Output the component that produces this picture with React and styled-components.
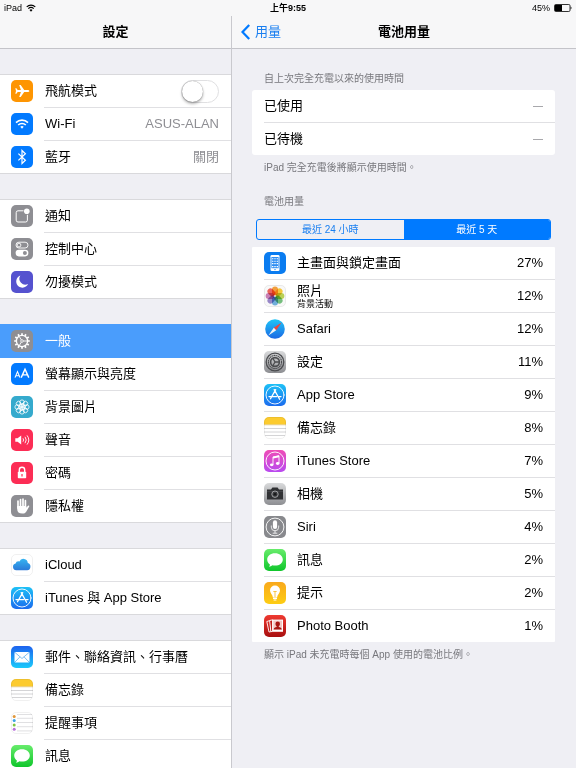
import styled, { createGlobalStyle, css } from "styled-components";
import { useState } from "react";

const GlobalStyle = createGlobalStyle`
  *, *::before, *::after {
    box-sizing: border-box;
  }
  body {
    margin: 0;
    background: #efeff4;
    color: #000;
    font-family: "Liberation Sans", "Noto Sans CJK TC", sans-serif;
    font-size: 13px;
    line-height: 18px;
  }
  a {
    color: inherit;
    text-decoration: none;
  }
`;

const Screen = styled.div`
  display: flex;
  flex-direction: column;
  height: 100vh;
  overflow: hidden;
`;

const StatusBar = styled.header`
  display: grid;
  grid-template-columns: 1fr auto 1fr;
  align-items: center;
  height: 16px;
  padding: 0 4px;
  background: #f7f7f8;
  font-size: 9px;
  line-height: 16px;
`;

const StatusItem = styled.div`
  display: flex;
  align-items: center;
  justify-content: ${({ $end }) => ($end ? "flex-end" : "flex-start")};
  gap: 4px;
`;

const Columns = styled.div`
  display: grid;
  grid-template-columns: 29fr 43fr;
  flex: 1;
  min-height: 0;
`;

const Sidebar = styled.nav`
  min-height: 0;
  overflow: hidden;
  border-right: 1px solid #c9c9ce;
`;

const Detail = styled.main`
  min-height: 0;
  overflow: hidden;
`;

const TitleBar = styled.div`
  display: grid;
  grid-template-columns: 1fr auto 1fr;
  align-items: center;
  height: 33px;
  padding: 0 9px;
  background: #f7f7f8;
  border-bottom: 1px solid #c4c4c9;
`;

const Title = styled.h1`
  grid-column: 2;
  margin: 0;
  font-size: 13px;
  font-weight: 700;
`;

const BackLink = styled.a`
  display: flex;
  align-items: center;
  gap: 5px;
  color: #1a7ff0;
`;

const Groups = styled.div`
  display: flex;
  flex-direction: column;
  gap: 25px;
  padding-top: 25px;
`;

const Group = styled.ul`
  margin: 0;
  padding: 0;
  list-style: none;
  background: #fff;
  border-top: 1px solid #d9d9dc;
  border-bottom: 1px solid #d9d9dc;
`;

const rowLayout = css`
  display: flex;
  align-items: flex-start;
  padding-left: 11px;
  gap: 11px;
`;

const RowBody = styled.span`
  display: flex;
  flex: 1;
  align-items: center;
  justify-content: space-between;
  height: 32px;
  padding: 0 12px 0 1px;
`;

const MenuItem = styled.li`
  &:not(:last-child) ${RowBody} {
    height: 33px;
    border-bottom: 1px solid #e0e0e3;
  }
`;

const MenuLink = styled.a`
  ${rowLayout}
  ${({ $active }) =>
    $active &&
    css`
      background: #4a9dfc;
      color: #fff;
      box-shadow: 0 -1px 0 #4a9dfc;
      && ${RowBody} {
        border-color: #4a9dfc;
      }
    `}
`;

const MenuLabel = styled.label`
  ${rowLayout}
`;

const Value = styled.span`
  color: #8e8e93;
`;

const Switch = styled.input`
  appearance: none;
  width: 38px;
  height: 23px;
  margin: 0;
  border: 1px solid #e0e0e2;
  border-radius: 12px;
  background: #fff;

  &::before {
    content: "";
    display: block;
    width: 21px;
    height: 21px;
    border-radius: 50%;
    background: #fff;
    box-shadow: 0 0 1px rgba(0, 0, 0, 0.5), 0 2px 3px rgba(0, 0, 0, 0.3);
  }
  &:checked {
    background: #4cd964;
  }
  &:checked::before {
    margin-left: 15px;
  }
`;

const Content = styled.div`
  padding: 23px 21px 0 20px;
`;

const Section = styled.section`
  & + & {
    margin-top: 20px;
  }
`;

const Caption = styled.h2`
  margin: 0 12px 4px;
  color: #77777c;
  font-size: 10px;
  font-weight: 400;
  line-height: 14px;
`;

const Note = styled.p`
  margin: 6px 12px 0;
  color: #77777c;
  font-size: 10px;
  line-height: 14px;
`;

const Card = styled.ul`
  margin: 0;
  padding: 0;
  list-style: none;
  background: #fff;
  border-radius: ${({ $square }) => ($square ? "1px" : "3px")};
`;

const CardRow = styled.li`
  display: flex;
  align-items: center;
  gap: 11px;
  height: 32px;
  margin-left: 12px;
  padding-right: 12px;

  &:not(:last-child) {
    height: 33px;
    border-bottom: 1px solid #e0e0e3;
  }
`;

const CardText = styled.div`
  flex: 1;
  line-height: 16px;
`;

const SubText = styled.div`
  font-size: 9px;
  line-height: 10px;
`;

const Dash = styled.span`
  color: #8e8e93;
  font-size: 10px;
`;

const Segmented = styled.div`
  display: flex;
  height: 21px;
  margin: 10px 4px 7px;
  border: 1px solid #007aff;
  border-radius: 3px;
  overflow: hidden;
`;

const Segment = styled.button`
  flex: 1;
  padding: 0;
  border: 0;
  background: ${({ $selected }) => ($selected ? "#007aff" : "transparent")};
  color: ${({ $selected }) => ($selected ? "#fff" : "#1a7ff0")};
  font-family: inherit;
  font-size: 10px;
  line-height: 18px;
`;

const IconSvg = styled.svg`
  display: block;
  flex: none;
  width: 22px;
  height: 22px;
  margin: 5px 0;
`;

const BatteryIcon = styled.svg`
  display: block;
  width: 18px;
  height: 8px;
`;

const WifiIcon = styled.svg`
  display: block;
  width: 10px;
  height: 8px;
`;

const Chevron = styled.svg`
  display: block;
  width: 9px;
  height: 16px;
`;

const WAVES = (
  <>
    <path d="M5 9.6a8.6 8.6 0 0 1 12 0" strokeWidth="1.6" />
    <path d="M7.2 12a5.4 5.4 0 0 1 7.6 0" strokeWidth="1.6" />
    <path d="M11 15.8l-1.7-2a2.6 2.6 0 0 1 3.4 0z" fill="#fff" stroke="none" />
  </>
);

const APP_STORE = (
  <g fill="none" stroke="#fff" strokeLinecap="round">
    <circle cx="11" cy="11" r="9" strokeWidth="0.9" />
    <path d="M11.7 5.6 6.5 14.8M10.2 5.6l5.4 9.6M5 12.6h7.6M14.8 12.6H17" strokeWidth="1.3" />
  </g>
);

const BUBBLE = (
  <path
    d="M11 4.2c4.4 0 7.8 2.7 7.8 6.2s-3.4 6.2-7.8 6.2c-.9 0-1.8-.1-2.6-.3-.9.8-2.2 1.3-3.5 1.4.7-.7 1-1.5 1-2.3-1.700-1.200-2.700-3-2.700-5C3.200 6.900 6.600 4.200 11 4.200z"
    fill="#fff"
  />
);

const NOTES = (
  <>
    <path d="M0 7.5V5a5 5 0 0 1 5-5h12a5 5 0 0 1 5 5v2.5z" fill="#fccb2f" />
    <path d="M0 7.8h22" stroke="#d9b45a" strokeWidth="0.6" />
    <path d="M0 11.5h22M0 15h22M1 18.5h20" stroke="#c9c9cc" strokeWidth="0.8" />
  </>
);

const PETALS = ["#f7941d", "#fbc41c", "#b5cf3a", "#5fb96a", "#5aa6dc", "#8a77c4", "#c66fae", "#ee4f43"];
const TEETH = Array.from({ length: 12 }, (_, i) => i * 30);

// every glyph is drawn on a 22 x 22 tile
const ICONS = {
  airplane: {
    fill: "#fe9502",
    art: (
      <path
        d="M18.4 11c0 .7-.9 1.1-2 1.1h-3.2l-3.500 5H8.200l1.700-5H6.700l-1.300 1.600H4.300L5 11l-.7-2.700h1.100l1.300 1.600h3.200l-1.700-5h1.500l3.500 5h3.200c1.100 0 2 .4 2 1.100z"
        fill="#fff"
      />
    ),
  },
  wifi: { fill: "#027aff", art: <g fill="none" stroke="#fff">{WAVES}</g> },
  bluetooth: {
    fill: "#027aff",
    art: <path d="M7.4 7.6l7 6.700-3.400 3.200v-13l3.400 3.200-7 6.700" fill="none" stroke="#fff" strokeWidth="1.2" />,
  },
  notifications: {
    fill: "#8e8e93",
    art: (
      <>
        <path d="M12.5 5.800H7A1.800 1.800 0 0 0 5.200 7.600v7.600A1.800 1.800 0 0 0 7 17h7.600a1.800 1.800 0 0 0 1.800-1.800V9.800" fill="none" stroke="#fff" />
        <circle cx="15.8" cy="6.3" r="2.8" fill="#fff" />
      </>
    ),
  },
  control: {
    fill: "#8e8e93",
    art: (
      <>
        <rect x="5" y="4.2" width="12" height="5.8" rx="2.9" fill="none" stroke="#fff" strokeWidth="0.9" />
        <circle cx="8" cy="7.1" r="1.9" fill="none" stroke="#fff" strokeWidth="0.9" />
        <rect x="4.6" y="11.8" width="12.8" height="6.6" rx="3.3" fill="#fff" />
        <circle cx="13.9" cy="15.1" r="2" fill="#8e8e93" />
      </>
    ),
  },
  moon: {
    fill: "#5552cf",
    art: <path d="M9.3 4.600a6.200 6.200 0 1 0 7.800 8.300 5.900 5.900 0 0 1-7.800-8.300z" fill="#fff" />,
  },
  general: {
    fill: "#8e8e93",
    art: (
      <g fill="none" stroke="#fff">
        <circle cx="11" cy="11" r="5.6" strokeWidth="1.3" />
        {TEETH.map((a) => (
          <path key={a} d="M11 5V3.2" strokeWidth="1.7" transform={`rotate(${a} 11 11)`} />
        ))}
        <circle cx="11" cy="11" r="1.3" strokeWidth="0.8" />
        <path d="M12.3 11h4M10.3 9.9 8.3 6.5M10.3 12.1l-2 3.4" strokeWidth="0.9" />
      </g>
    ),
  },
  display: {
    fill: "#027aff",
    art: (
      <g fill="none" stroke="#fff">
        <path d="M4 14.6 6.5 8.6 9 14.6M4.900 12.700h3.200" strokeWidth="1.1" />
        <path d="M10.2 14.6 14 6.200 17.800 14.600M11.400 11.900h5.200" strokeWidth="1.4" />
      </g>
    ),
  },
  wallpaper: {
    fill: "#35aacd",
    art: (
      <g fill="none" stroke="#fff" strokeWidth="0.8">
        {[0, 45, 90, 135, 180, 225, 270, 315].map((a) => (
          <circle key={a} cx="11" cy="6.2" r="2.3" transform={`rotate(${a} 11 11)`} />
        ))}
        {[22, 82, 142, 202, 262, 322].map((a) => (
          <circle key={a} cx="11" cy="8.9" r="1.5" transform={`rotate(${a} 11 11)`} />
        ))}
      </g>
    ),
  },
  sound: {
    fill: "#fc2d55",
    art: (
      <>
        <path d="M4.3 9.2h2.3l3.600-2.600v8.800l-3.600-2.600H4.300z" fill="#fff" />
        <path d="M12 9.300a3 3 0 0 1 0 3.400M14 7.800a5.200 5.200 0 0 1 0 6.400M16 6.400a7.400 7.400 0 0 1 0 9.200" fill="none" stroke="#fff" strokeWidth="0.9" />
      </>
    ),
  },
  lock: {
    fill: "#fc2d55",
    art: (
      <>
        <path d="M8.3 10.5V8a2.700 2.700 0 0 1 5.400 0v2.500" fill="none" stroke="#fff" strokeWidth="1.4" />
        <rect x="6.8" y="9.7" width="8.4" height="6.5" rx="0.8" fill="#fff" />
        <path d="M11 12v2.6" stroke="#fc2d55" strokeWidth="1.2" />
      </>
    ),
  },
  hand: {
    fill: "#8e8e93",
    art: (
      <>
        <path d="M7 6v7M9.5 4.500v8M12 4.200v8M14.400 5.700v7.300" stroke="#fff" strokeWidth="1.7" strokeLinecap="round" />
        <path d="M6.200 11h9v1.800l1.800-2.100c.8-.6 1.600.1 1.200.9l-3 5.200c-.8 1.300-1.900 1.800-3.900 1.800-3.400 0-5.100-1.600-5.100-4.600z" fill="#fff" />
      </>
    ),
  },
  icloud: {
    fill: "#fff",
    outline: true,
    art: (
      <path
        d="M5.300 16.300a3.400 3.400 0 0 1-.7-6.700 3.100 3.100 0 0 1 3.800-2.200 4.400 4.400 0 0 1 8.400 1.500 3.800 3.800 0 0 1-.7 7.400z"
        fill="url(#cloud)"
      />
    ),
  },
  appstore: { fill: "url(#blue)", art: APP_STORE },
  mail: {
    fill: "url(#mail)",
    art: (
      <>
        <rect x="3.5" y="6" width="15" height="10.5" rx="1" fill="#fff" />
        <path d="M4 6.500l7 6 7-6M4 16l5-5.200M18 16l-5-5.200" fill="none" stroke="#4ba5e8" strokeWidth="0.7" />
      </>
    ),
  },
  notes: { fill: "#fff", outline: true, art: NOTES },
  reminders: {
    fill: "#fff",
    outline: true,
    art: (
      <>
        <path d="M6 2.500h15M6 6.300h16M6 10.500h16M6 14.700h16M6 18.900h15" stroke="#d2d2d5" strokeWidth="0.7" />
        <circle cx="3.2" cy="4.4" r="1.5" fill="#e0973a" />
        <circle cx="3.2" cy="8.6" r="1.5" fill="#3aa2e8" />
        <circle cx="3.2" cy="13" r="1.5" fill="#7ec643" />
        <circle cx="3.2" cy="17.2" r="1.5" fill="#b96fdb" />
      </>
    ),
  },
  messages: { fill: "url(#green)", art: BUBBLE },
  home: {
    fill: "#0a7cf0",
    art: (
      <>
        <rect x="6.5" y="3" width="9" height="16" rx="1.3" fill="#fff" />
        <rect x="7.4" y="5" width="7.2" height="11.2" fill="#2b8cf2" />
        <path d="M8 6.800h6M8 9.200h6M8 11.600h6M8 14.600h6" stroke="#fff" strokeWidth="1.1" strokeDasharray="1.4 .9" />
        <circle cx="11" cy="17.6" r="0.7" fill="#0a7cf0" />
      </>
    ),
  },
  photos: {
    fill: "#f8f8f8",
    outline: true,
    art: PETALS.map((color, i) => (
      <rect
        key={color}
        x="8"
        y="1.6"
        width="6"
        height="8.6"
        rx="3"
        fill={color}
        fillOpacity="0.85"
        style={{ mixBlendMode: "multiply" }}
        transform={`rotate(${i * 45} 11 11)`}
      />
    )),
  },
  safari: {
    fill: "#fff",
    art: (
      <>
        <circle cx="11" cy="11" r="9.8" fill="url(#safari)" />
        <path d="M17.600 4.400l-5.400 7.800-2.400-2.400z" fill="#f0453a" />
        <path d="M4.400 17.600l5.400-7.800 2.400 2.400z" fill="#f4f4f4" />
      </>
    ),
  },
  settings: {
    fill: "url(#silver)",
    art: (
      <g fill="none" stroke="#4c4d50">
        <circle cx="11" cy="11" r="8.8" strokeWidth="1.3" />
        <circle cx="11" cy="11" r="6.6" strokeWidth="1.1" strokeDasharray="1.6 .5" />
        <circle cx="11" cy="11" r="4.4" strokeWidth="1.6" />
        <path d="M11 11h4.500M11 11 8.700 7M11 11l-2.300 4" strokeWidth="1.3" />
      </g>
    ),
  },
  itunes: {
    fill: "url(#pink)",
    art: (
      <>
        <circle cx="11" cy="11" r="9" fill="none" stroke="#fff" strokeWidth="0.9" />
        <path d="M9 14.600V7l6-1.300v7.500" fill="none" stroke="#fff" strokeWidth="0.9" />
        <path d="M9 7.700l6-1.300" stroke="#fff" strokeWidth="1.8" />
        <ellipse cx="7.7" cy="14.8" rx="1.8" ry="1.4" fill="#fff" />
        <ellipse cx="13.7" cy="13.5" rx="1.8" ry="1.4" fill="#fff" />
      </>
    ),
  },
  camera: {
    fill: "url(#silver)",
    art: (
      <>
        <path d="M3 6.500h4l1.400-1.900h5.200L15 6.500h4v10H3z" fill="#303134" />
        <path d="M3 8.600h16" stroke="#5b5c60" strokeWidth="0.5" />
        <circle cx="11" cy="11.2" r="3.2" fill="#3a3b3e" stroke="#aaabae" strokeWidth="0.9" />
        <circle cx="11" cy="11.2" r="1.3" fill="#18191b" />
      </>
    ),
  },
  siri: {
    fill: "#88898d",
    art: (
      <g fill="none" stroke="#fff">
        <circle cx="11" cy="11" r="8.9" strokeWidth="0.9" />
        <rect x="8.9" y="4.3" width="4.2" height="8.7" rx="2.1" fill="#fff" stroke="none" />
        <path d="M7.300 9.500v1.600a3.700 3.700 0 0 0 7.400 0V9.500M11 14.800v2.400M8.700 17.200h4.600" strokeWidth="0.8" />
      </g>
    ),
  },
  tips: {
    fill: "url(#amber)",
    art: (
      <>
        <path d="M11 3.600a5 5 0 0 1 5 5c0 2.800-2.700 4.100-2.900 6.800H8.900C8.700 12.700 6 11.400 6 8.600a5 5 0 0 1 5-5z" fill="#fff" />
        <path d="M9 16.400h4M9.600 18h2.800" stroke="#fff" strokeWidth="1.2" />
        <path d="M9.300 9.500h3.400M11 9.500v5.500" stroke="#f8b71b" strokeWidth="0.8" />
      </>
    ),
  },
  booth: {
    fill: "url(#red)",
    art: (
      <>
        <path d="M2.800 6.500l4-1.200v11.400L5 17z" fill="none" stroke="#fff" strokeWidth="0.9" />
        <path d="M5.600 5.600l3-.8v11.500l-1.700.4z" fill="#c11d17" stroke="#fff" strokeWidth="0.9" />
        <rect x="8.3" y="4.6" width="10.7" height="12.2" fill="#fff" />
        <rect x="9.3" y="5.6" width="8.7" height="9" fill="#f3c9c5" />
        <circle cx="13.7" cy="8.9" r="2.3" fill="#a81713" />
        <path d="M9.600 14.600c.1-1.900 1.600-2.200 3-2.700V10h2.200v1.900c1.400.5 2.900.8 3 2.700z" fill="#a81713" />
      </>
    ),
  },
};

const GRADIENTS = [
  ["cloud", "#36b4f1", "#2b79d8"],
  ["blue", "#1ec1f6", "#1b6cee"],
  ["mail", "#1d62ee", "#1bcafb"],
  ["green", "#67ec6b", "#10c62c"],
  ["safari", "#1fc5f8", "#1c68e4"],
  ["silver", "#d9dadb", "#8d8e92"],
  ["pink", "#ef4db6", "#b94af0"],
  ["amber", "#f9a91c", "#fdcd14"],
  ["red", "#ef3a31", "#a80f10"],
];

const Defs = styled.svg`
  display: block;
  width: 0;
  height: 0;
`;

function Gradients() {
  return (
    <Defs aria-hidden="true">
      <defs>
        {GRADIENTS.map(([id, from, to]) => (
          <linearGradient key={id} id={id} x1="0" y1="0" x2="0" y2="1">
            <stop offset="0" stopColor={from} />
            <stop offset="1" stopColor={to} />
          </linearGradient>
        ))}
      </defs>
    </Defs>
  );
}

function Icon({ name }) {
  const { fill, art, outline } = ICONS[name];

  return (
    <IconSvg viewBox="0 0 22 22" aria-hidden="true">
      <rect width="22" height="22" rx="5" fill={fill} />
      {art}
      {outline && <rect x="0.5" y="0.5" width="21" height="21" rx="4.5" fill="none" stroke="#000" strokeOpacity="0.06" />}
    </IconSvg>
  );
}

const menu = [
  [
    { icon: "airplane", label: "飛航模式", toggle: true },
    { icon: "wifi", label: "Wi-Fi", value: "ASUS-ALAN" },
    { icon: "bluetooth", label: "藍牙", value: "關閉" },
  ],
  [
    { icon: "notifications", label: "通知" },
    { icon: "control", label: "控制中心" },
    { icon: "moon", label: "勿擾模式" },
  ],
  [
    { icon: "general", label: "一般", active: true },
    { icon: "display", label: "螢幕顯示與亮度" },
    { icon: "wallpaper", label: "背景圖片" },
    { icon: "sound", label: "聲音" },
    { icon: "lock", label: "密碼" },
    { icon: "hand", label: "隱私權" },
  ],
  [
    { icon: "icloud", label: "iCloud" },
    { icon: "appstore", label: "iTunes 與 App Store" },
  ],
  [
    { icon: "mail", label: "郵件、聯絡資訊、行事曆" },
    { icon: "notes", label: "備忘錄" },
    { icon: "reminders", label: "提醒事項" },
    { icon: "messages", label: "訊息" },
  ],
];

const usage = [
  { icon: "home", label: "主畫面與鎖定畫面", percent: 27 },
  { icon: "photos", label: "照片", sub: "背景活動", percent: 12 },
  { icon: "safari", label: "Safari", percent: 12 },
  { icon: "settings", label: "設定", percent: 11 },
  { icon: "appstore", label: "App Store", percent: 9 },
  { icon: "notes", label: "備忘錄", percent: 8 },
  { icon: "itunes", label: "iTunes Store", percent: 7 },
  { icon: "camera", label: "相機", percent: 5 },
  { icon: "siri", label: "Siri", percent: 4 },
  { icon: "messages", label: "訊息", percent: 2 },
  { icon: "tips", label: "提示", percent: 2 },
  { icon: "booth", label: "Photo Booth", percent: 1 },
];

const ranges = ["最近 24 小時", "最近 5 天"];

function MenuRow({ item }) {
  const { icon, label, value, toggle, active } = item;

  if (toggle)
    return (
      <MenuItem>
        <MenuLabel>
          <Icon name={icon} />
          <RowBody>
            {label}
            <Switch type="checkbox" />
          </RowBody>
        </MenuLabel>
      </MenuItem>
    );

  return (
    <MenuItem>
      <MenuLink href={`#${icon}`} $active={active} aria-current={active ? "page" : undefined}>
        <Icon name={icon} />
        <RowBody>
          {label}
          {value && <Value>{value}</Value>}
        </RowBody>
      </MenuLink>
    </MenuItem>
  );
}

function BatteryUsage() {
  const [range, setRange] = useState(1);

  return (
    <Content>
      <Section>
        <Caption>自上次完全充電以來的使用時間</Caption>
        <Card>
          <CardRow>
            <CardText>已使用</CardText>
            <Dash>—</Dash>
          </CardRow>
          <CardRow>
            <CardText>已待機</CardText>
            <Dash>—</Dash>
          </CardRow>
        </Card>
        <Note>iPad 完全充電後將顯示使用時間。</Note>
      </Section>
      <Section>
        <Caption>電池用量</Caption>
        <Segmented>
          {ranges.map((label, i) => (
            <Segment key={label} type="button" $selected={i === range} aria-pressed={i === range} onClick={() => setRange(i)}>
              {label}
            </Segment>
          ))}
        </Segmented>
        <Card $square>
          {usage.map(({ icon, label, sub, percent }) => (
            <CardRow key={icon}>
              <Icon name={icon} />
              <CardText>
                {label}
                {sub && <SubText>{sub}</SubText>}
              </CardText>
              <span>{percent}%</span>
            </CardRow>
          ))}
        </Card>
        <Note>顯示 iPad 未充電時每個 App 使用的電池比例。</Note>
      </Section>
    </Content>
  );
}

export default function App() {
  return (
    <>
      <GlobalStyle />
      <Gradients />
      <Screen>
        <StatusBar>
          <StatusItem>
            iPad
            <WifiIcon viewBox="0 0 10 8" fill="none" stroke="#000" aria-hidden="true">
              <path d="M.7 2.900a6.200 6.200 0 0 1 8.600 0M2.300 4.700a3.900 3.900 0 0 1 5.400 0" strokeWidth="1.1" />
              <path d="M5 7.700 3.500 6a2.200 2.200 0 0 1 3 0z" fill="#000" stroke="none" />
            </WifiIcon>
          </StatusItem>
          <strong>上午9:55</strong>
          <StatusItem $end>
            45%
            <BatteryIcon viewBox="0 0 18 8" aria-hidden="true">
              <rect x="0.5" y="0.5" width="15.5" height="7" rx="1.2" fill="none" stroke="#000" strokeWidth="0.8" />
              <rect x="1" y="1" width="7" height="6" fill="#000" />
              <path d="M16.600 2.600c1.200.3 1.200 2.500 0 2.800z" fill="#000" />
            </BatteryIcon>
          </StatusItem>
        </StatusBar>
        <Columns>
          <Sidebar>
            <TitleBar>
              <Title>設定</Title>
            </TitleBar>
            <Groups>
              {menu.map((items) => (
                <Group key={items[0].icon}>
                  {items.map((item) => (
                    <MenuRow key={item.icon} item={item} />
                  ))}
                </Group>
              ))}
            </Groups>
          </Sidebar>
          <Detail>
            <TitleBar>
              <BackLink href="#usage">
                <Chevron viewBox="0 0 9 16" fill="none" stroke="#007aff" strokeWidth="2.2" aria-hidden="true">
                  <path d="M8.200.9 1.500 8l6.700 7.100" />
                </Chevron>
                用量
              </BackLink>
              <Title>電池用量</Title>
            </TitleBar>
            <BatteryUsage />
          </Detail>
        </Columns>
      </Screen>
    </>
  );
}
